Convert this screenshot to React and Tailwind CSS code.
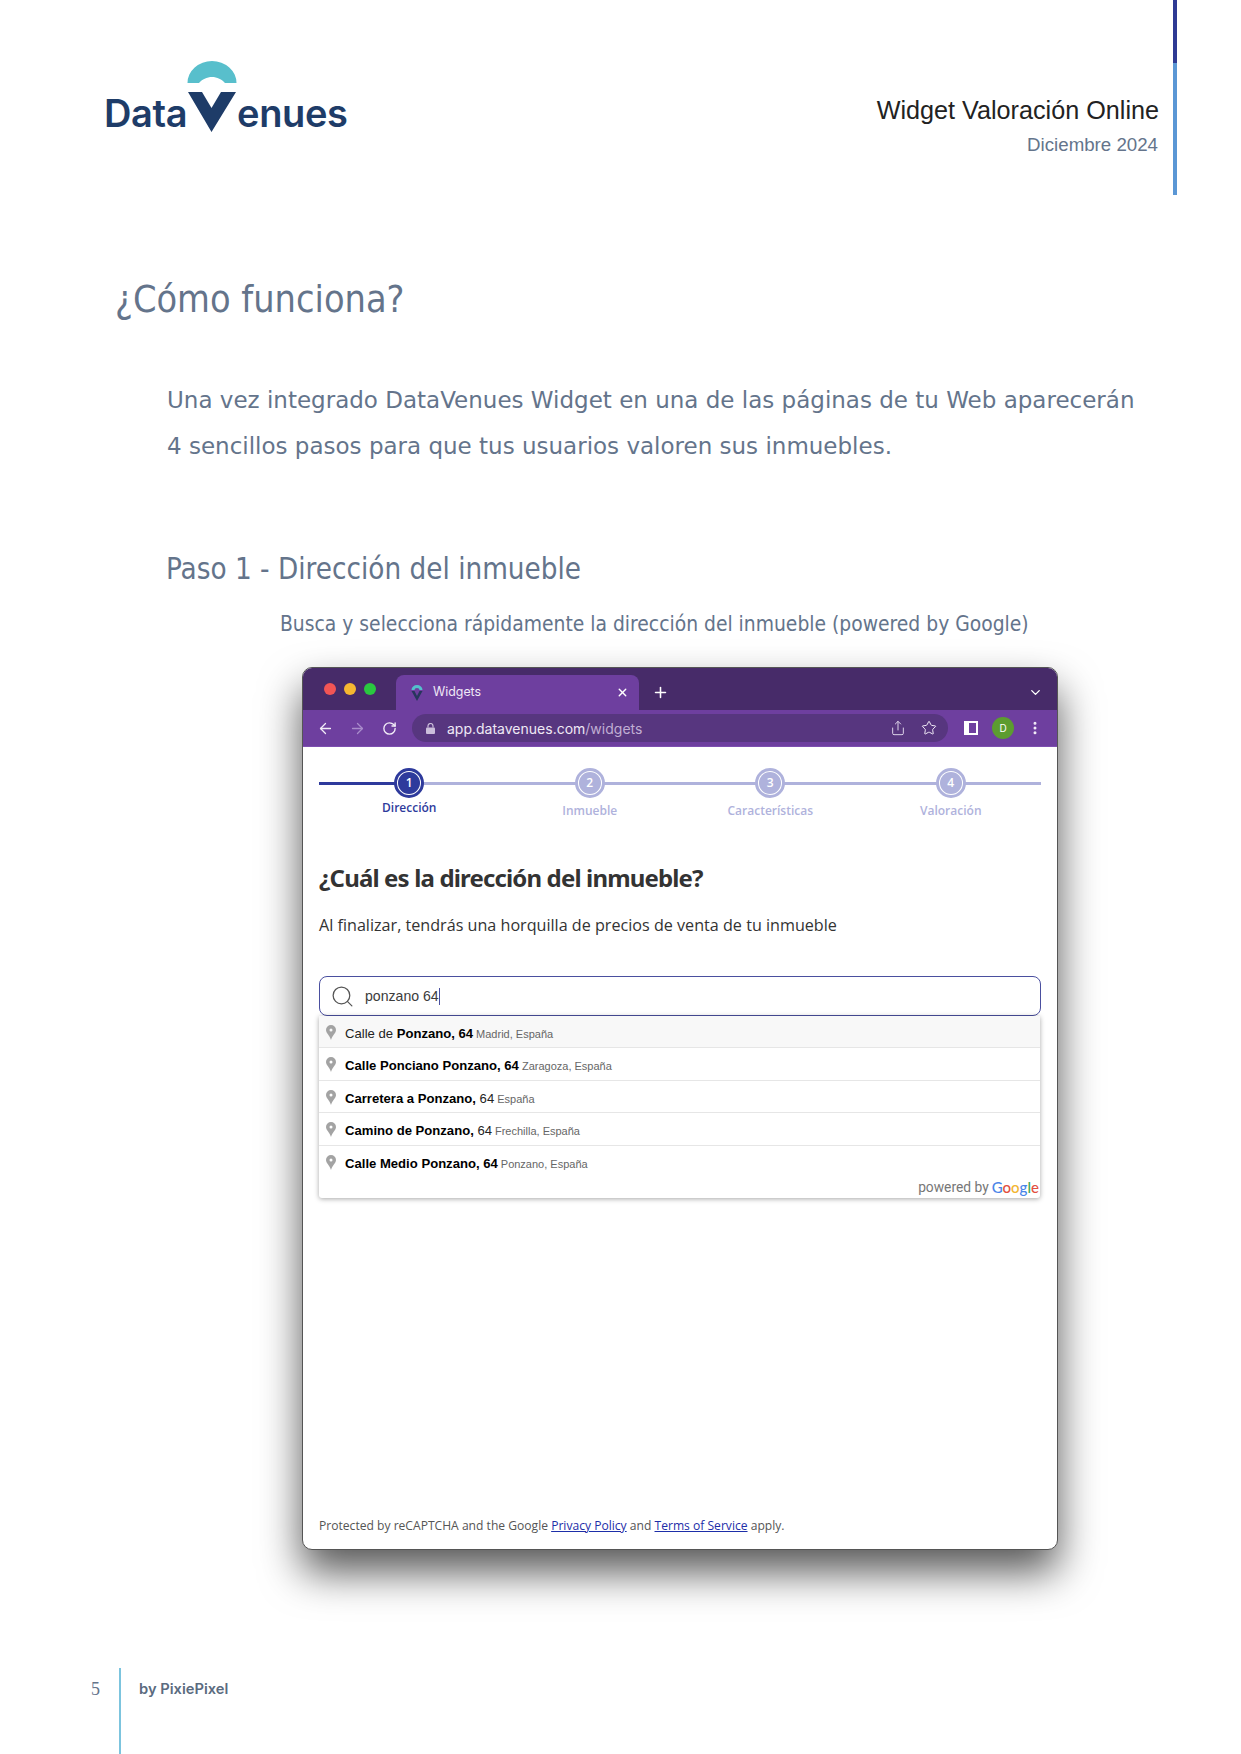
import { ChevronDown, EllipsisVertical, Search, Star, Plus, X, ArrowLeft, ArrowRight, RotateCw, Share } from "lucide-react";

const steps = [
  { n: 1, label: "Dirección", active: true },
  { n: 2, label: "Inmueble" },
  { n: 3, label: "Características" },
  { n: 4, label: "Valoración" },
];

const places = [
  { main: [["Calle de ", false], ["Ponzano,", true], [" 64", true]], rest: "Madrid, España" },
  { main: [["Calle Ponciano Ponzano, 64", true]], rest: "Zaragoza, España" },
  { main: [["Carretera a Ponzano,", true], [" 64", false]], rest: "España" },
  { main: [["Camino de Ponzano,", true], [" 64", false]], rest: "Frechilla, España" },
  { main: [["Calle Medio Ponzano, 64", true]], rest: "Ponzano, España" },
];

function PinMark() {
  return (
    <svg width="50" height="71" viewBox="0 0 50 71" className="shrink-0">
      <path d="M0.5 22 A24.5 22 0 0 1 49.5 22 L38 22 C35 18.5 30 16 25 16 C20 16 15 18.5 12 22 Z" fill="#58bfcc" />
      <path d="M1 31 L15 31 L24.5 47 L34 31 L49 31 L24.5 71 Z" fill="#1e3c68" />
    </svg>
  );
}

function Logo() {
  return (
    <div className="flex items-end font-['Inter',sans-serif] text-[38px] leading-none font-semibold tracking-[-0.4px] text-[#1e3c68]">
      <span>Data</span>
      <PinMark />
      <span>enues</span>
    </div>
  );
}

function Stepper() {
  return (
    <div className="relative mx-[16px] grid grid-cols-4 pt-[21px]">
      <div className="absolute left-0 right-0 top-[35px] h-[3px] bg-[#afb2dc]" />
      <div className="absolute left-0 top-[35px] h-[3px] w-[90px] bg-[#2e3a9c]" />
      {steps.map((s) => (
        <div key={s.n} className="relative flex flex-col items-center font-['Open_Sans',sans-serif] font-semibold">
          <div className={`flex size-[30px] items-center justify-center rounded-full border-[3px] bg-white ${s.active ? "border-[#2e3a9c]" : "border-[#afb2dc]"}`}>
            <div className={`flex size-[22px] shrink-0 items-center justify-center rounded-full text-[12px] text-white ${s.active ? "bg-[#2e3a9c]" : "bg-[#afb2dc]"}`}>
              {s.n}
            </div>
          </div>
          <div className={`text-[12px] leading-[16px] ${s.active ? "mt-[2px] text-[#2e3a9c]" : "mt-[5px] text-[#afb2dc]"}`}>{s.label}</div>
        </div>
      ))}
    </div>
  );
}

function Browser() {
  return (
    <div className="flex h-[883px] w-[756px] flex-col overflow-hidden rounded-[10px] border border-[#555] bg-white shadow-[0_22px_42px_rgba(0,0,0,0.66)]">
      <div className="flex h-[42px] shrink-0 items-end bg-[#472b69]">
        <div className="flex h-[33px] w-[93px] items-start gap-[8px] pl-[21px] pt-[6px]">
          <span className="size-[12px] rounded-full bg-[#f25555]" />
          <span className="size-[12px] rounded-full bg-[#f6b731]" />
          <span className="size-[12px] rounded-full bg-[#2ac840]" />
        </div>
        <div className="flex h-[35px] w-[243px] items-center rounded-t-[8px] bg-[#6e3f9f] pl-[15px] pr-[10px] font-['Inter',sans-serif] text-[12.4px] text-[#f0e9f6]">
          <svg width="12" height="16" viewBox="0 0 12 16" className="shrink-0">
            <path d="M0.5 5 A5.5 5 0 0 1 11.5 5 L8.5 5 A2.5 2 0 0 0 3.5 5 Z" fill="#54c0cc" />
            <path d="M0.5 6 L3.5 6 L6 11 L8.5 6 L11.5 6 L6 16 Z" fill="#26365c" />
          </svg>
          <span className="ml-[10px] flex-1">Widgets</span>
          <X size={13} strokeWidth={2.5} className="text-white" />
        </div>
        <div className="flex h-[35px] items-center pl-[13px]">
          <Plus size={17} strokeWidth={2.2} className="text-white" />
        </div>
        <div className="ml-auto flex h-[35px] items-center pr-[14px]">
          <ChevronDown size={15} strokeWidth={2.2} className="text-white" />
        </div>
      </div>
      <div className="flex h-[37px] shrink-0 items-center border-b border-[#7d4fb0] bg-[#6e3f9f] text-[#f2ecf7]">
        <ArrowLeft size={17} strokeWidth={1.8} className="ml-[14px]" />
        <ArrowRight size={17} strokeWidth={1.8} className="ml-[15px] text-[#a98ccb]" />
        <RotateCw size={15} strokeWidth={2.2} className="ml-[16px]" />
        <div className="ml-[15px] flex h-[28px] w-[536px] shrink-0 items-center rounded-full bg-[#57367f] pl-[14px] pr-[10px] font-['Inter',sans-serif] text-[14px]">
          <svg width="9" height="11" viewBox="0 0 9 11" className="shrink-0">
            <path d="M2 4.5 V3 A2.5 2.5 0 0 1 7 3 V4.5" fill="none" stroke="#cbbedb" strokeWidth="1.2" />
            <rect x="0" y="4.5" width="9" height="6.5" rx="1" fill="#cbbedb" />
          </svg>
          <span className="ml-[12px] text-[#efe9f5]">app.datavenues.com</span>
          <span className="text-[#c0aed3]">/widgets</span>
          <Share size={16} strokeWidth={1.5} className="ml-auto text-[#dcd2e8]" />
          <Star size={16} strokeWidth={1.5} className="ml-[15px] mr-[1px] text-[#f0eaf6]" />
        </div>
        <div className="ml-[16px] flex h-[14px] w-[14px] shrink-0 justify-end border-[2px] border-white bg-white">
          <div className="h-full w-[7px] bg-[#6e3f9f]" />
        </div>
        <div className="ml-[14px] flex size-[22px] shrink-0 items-center justify-center rounded-full bg-[#5c9c30] font-['Inter',sans-serif] text-[10px] text-white">D</div>
        <EllipsisVertical size={16} strokeWidth={2.5} className="ml-[13px] shrink-0" />
      </div>
      <div className="flex flex-1 flex-col">
        <Stepper />
        <h2 className="mx-[16px] mt-[43px] font-['Noto_Sans',sans-serif] text-[24px] leading-[32px] font-bold tracking-[-0.85px] text-[#333]">
          ¿Cuál es la dirección del inmueble?
        </h2>
        <p className="mx-[16px] mt-[20px] font-['Open_Sans',sans-serif] text-[16.15px] leading-[22px] text-[#333]">
          Al finalizar, tendrás una horquilla de precios de venta de tu inmueble
        </p>
        <div className="mx-[16px] mt-[40px] flex h-[40px] shrink-0 items-center rounded-[8px] border border-[#4a4f9f] pl-[10px] font-['Liberation_Sans',sans-serif] text-[14.1px] text-[#3c3c3c]">
          <Search size={25} strokeWidth={1.2} className="text-[#555]" />
          <span className="ml-[10px] border-r border-[#4a4f9f] leading-[17px]">ponzano 64</span>
        </div>
        <div className="ml-[16px] mr-[17px] flex flex-col rounded-b-[3px] bg-white font-['Liberation_Sans',sans-serif] shadow-[0_1px_5px_rgba(0,0,0,0.35)]">
          {places.map((p, i) => (
            <div key={i} className={`flex h-[32.4px] items-start border-[#e6e6e6] pl-[7px] pt-[10px] ${i === 0 ? "bg-[#f8f8f8]" : ""} ${i < 4 ? "border-b" : ""}`}>
              <svg width="10" height="15" viewBox="0 0 10 15" className="shrink-0 -mt-[1px]">
                <path d="M5 0 A5 5 0 0 1 10 5 C10 8 6.5 10 5 15 C3.5 10 0 8 0 5 A5 5 0 0 1 5 0 Z M5 3.5 A1.5 1.5 0 1 0 5 6.5 A1.5 1.5 0 1 0 5 3.5 Z" fill="#a3a3a3" fillRule="evenodd" />
              </svg>
              <span className="ml-[9px] whitespace-pre text-[13.1px] leading-[16px] text-[#222]">
                {p.main.map(([t, b], j) => (
                  <span key={j} className={b ? "font-bold text-black" : ""}>{t}</span>
                ))}
              </span>
              <span className="ml-[3px] text-[11px] leading-[17px] text-[#666]">{p.rest}</span>
            </div>
          ))}
          <div className="flex h-[20px] items-start justify-end pr-[1px] font-['Roboto',sans-serif] text-[13.8px] leading-[14px] text-[#777]">
            <span className="mt-[2px]">powered by</span>
            <span className="ml-[3px] mt-[2px] font-['Lato',sans-serif] text-[15px] font-medium leading-[14px]">
              <span className="text-[#4a85e8]">G</span>
              <span className="text-[#e2503f]">o</span>
              <span className="text-[#f2b632]">o</span>
              <span className="text-[#4a85e8]">g</span>
              <span className="text-[#3ba757]">l</span>
              <span className="text-[#e2503f]">e</span>
            </span>
          </div>
        </div>
        <p className="mx-[16px] mb-[15px] mt-auto font-['Open_Sans',sans-serif] text-[12.1px] leading-[16px] text-[#555]">
          Protected by reCAPTCHA and the Google <a className="text-[#1d2ea8] underline">Privacy Policy</a> and <a className="text-[#1d2ea8] underline">Terms of Service</a> apply.
        </p>
      </div>
    </div>
  );
}

export default function App() {
  return (
    <div className="flex h-[1754px] w-[1241px] flex-col overflow-hidden bg-white">
      <header className="flex h-[195px] shrink-0 items-start pl-[104px]">
        <div className="mt-[61px]">
          <Logo />
        </div>
        <div className="ml-auto mt-[95px] text-right font-['Liberation_Sans',sans-serif]">
          <div className="text-[25.2px] leading-[30px] text-[#222]">Widget Valoración Online</div>
          <div className="mt-[9px] pr-[1px] text-[18.7px] leading-[22px] text-[#64748b]">Diciembre 2024</div>
        </div>
        <div className="ml-[14px] mr-[64px] flex h-full w-[4px] flex-col bg-[#5b97d5]">
          <div className="h-[63px] bg-[#2e3a94]" />
        </div>
      </header>

      <main className="flex-1 font-['DejaVu_Sans',sans-serif] text-[#64748b]">
        <h1 className="ml-[115px] mt-[79px] text-[37.5px] leading-[50px] [font-stretch:condensed]">¿Cómo funciona?</h1>
        <div className="ml-[167px] mt-[53px] text-[23px] leading-[46px]">
          <p>Una vez integrado DataVenues Widget en una de las páginas de tu Web aparecerán</p>
          <p>4 sencillos pasos para que tus usuarios valoren sus inmuebles.</p>
        </div>
        <h3 className="ml-[166px] mt-[80px] text-[29.3px] leading-[40px] [font-stretch:condensed]">Paso 1 - Dirección del inmueble</h3>
        <p className="ml-[280px] mt-[20px] text-[20.85px] leading-[30px] [font-stretch:condensed]">
          Busca y selecciona rápidamente la dirección del inmueble (powered by Google)
        </p>
        <div className="mt-[28px] pl-[302px]">
          <Browser />
        </div>
      </main>

      <footer className="flex h-[86px] shrink-0 items-start">
        <div className="w-[119px] pr-[19px] pt-[10px] text-right font-['Liberation_Serif',serif] text-[18px] leading-[22px] text-[#64748b]">5</div>
        <div className="h-full w-[2px] bg-[#7cc4de]" />
        <div className="ml-[18px] pt-[10px] font-['Inter',sans-serif] text-[14.7px] leading-[22px] font-semibold text-[#5b6b80]">by PixiePixel</div>
      </footer>
    </div>
  );
}
